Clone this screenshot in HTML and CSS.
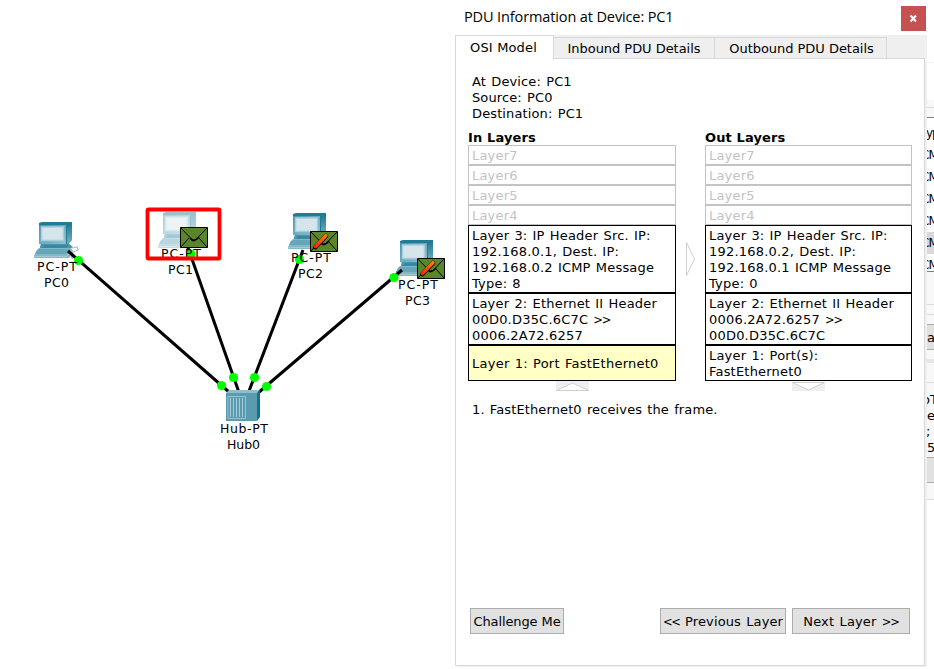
FILE: index.html
```html
<!DOCTYPE html>
<html lang="en">
<head>
<meta charset="utf-8">
<title>PDU Information</title>
<link rel="stylesheet" href="styles.css">
</head>
<body>
<main class="app">
  <svg class="topology" width="455" height="669" viewBox="0 0 455 669">
    <defs>
      <linearGradient id="shell" x1="0" y1="0" x2="1" y2="1">
        <stop offset="0" stop-color="#4496ae"/><stop offset="1" stop-color="#8fc0cf"/>
      </linearGradient>
      <linearGradient id="side" x1="0" y1="0" x2="0" y2="1">
        <stop offset="0" stop-color="#16748f"/><stop offset="1" stop-color="#79afc0"/>
      </linearGradient>
      <linearGradient id="pencil" x1="1" y1="0" x2="0" y2="1">
        <stop offset="0" stop-color="#ff7a00"/><stop offset="1" stop-color="#ff2a00"/>
      </linearGradient>
      <g id="pc">
        <path d="M7 21 H34 L39 25 L32 29 H5Z" fill="#4b93aa"/>
        <path d="M5 1 L8 0 H38 V18 L34 22 H5Z" fill="#207b96"/>
        <path d="M33 4 L38 0 V18 L33 22Z" fill="url(#side)"/>
        <path d="M5 3 H32 V22 H5Z" fill="url(#shell)"/>
        <path d="M7.500 5 H29.500 V18.500 H7.500Z" fill="#d5e5eb" stroke="#a9ced9" stroke-width="1.500"/>
        <path d="M10 23 H35 L32 26 H8Z" fill="#3789a2"/>
        <path d="M3 28 L5 26 H37 L39 29 L35 36 H0 V34Z" fill="#82b8c8"/>
        <path d="M3 28.500 L5 27 H36 L32 32 H1Z" fill="#65a6b9"/>
        <path d="M0 34.500 H33 L38 28" fill="none" stroke="#a2cad5"/>
      </g>
      <g id="mail">
        <path d="M.5 .5 H27.500 V20.500 H.5Z" fill="#5a852b" stroke="#000"/>
        <path d="M1 1 L11.500 12 Q14 14.500 16.500 12 L27 1 M1 20 L9 11 M19 11 L27 20" fill="none" stroke="#000" stroke-width="1"/>
        <path d="M10 11 L12 13 Q14 14.500 17 12 L19 10" fill="none" stroke="#000" stroke-width="1.600"/>
      </g>
      <g id="mail-edit">
        <use href="#mail"/>
        <path d="M5.500 16 L16 5" fill="none" stroke="#000" stroke-width="4.600" stroke-linecap="round"/>
        <path d="M5.500 15.500 L16 4.500" fill="none" stroke="url(#pencil)" stroke-width="3.400" stroke-linecap="round"/>
      </g>
    </defs>

    <use href="#pc" x="34" y="222"/>
    <path d="M72 248 L77 247 L78 250 L71 253 L73 257" fill="none" stroke="#a5c4ce" stroke-width="1.200"/>
    <path d="M69 254 L73 253 L76 257 L72 259Z" fill="#8badb9"/>
    <use href="#pc" x="158" y="212" class="faded"/>
    <use href="#pc" x="288" y="213"/>
    <use href="#pc" x="395" y="240"/>

    <g class="cable">
      <path d="M68 251 L229 392"/>
      <path d="M187 245 L238.500 391"/>
      <path d="M303 250 L249 391"/>
      <path d="M402 270 L258 393"/>
    </g>
    <g fill="#00ff00">
      <circle cx="78.500" cy="260.500" r="4.600"/><circle cx="191" cy="254" r="4.600"/>
      <circle cx="299.500" cy="259.500" r="4.600"/><circle cx="394" cy="277.500" r="4.600"/>
      <circle cx="221.500" cy="385.500" r="4.600"/><circle cx="233.500" cy="377.500" r="4.600"/>
      <circle cx="254.500" cy="377.500" r="4.600"/><circle cx="266.500" cy="386.500" r="4.600"/>
    </g>

    <g>
      <path d="M226 393 L229 390 H260 L257 393Z" fill="#8fbdcc"/>
      <path d="M257 393 L260 390 V417 L257 421Z" fill="#0d7690"/>
      <path d="M226 393 H257 V421 H226Z" fill="#5b9bb0"/>
      <path d="M228 396.500 H245.500 V418.500 H228Z" fill="#5b9bb0" stroke="#98c4d1"/>
      <path d="M230.500 398 V417 M233.500 398 V417 M236.500 398 V417 M239.500 398 V417 M242.500 398 V417" stroke="#a6ccd7" fill="none"/>
    </g>

    <g class="node-label">
      <text x="37" y="271" textLength="40">PC-PT</text><text x="44" y="287" textLength="25">PC0</text>
      <text x="161" y="258" textLength="40">PC-PT</text><text x="168" y="274" textLength="25">PC1</text>
      <text x="291" y="262" textLength="40">PC-PT</text><text x="298" y="278" textLength="25">PC2</text>
      <text x="398" y="289" textLength="40">PC-PT</text><text x="405" y="305" textLength="25">PC3</text>
      <text x="220" y="433" textLength="48">Hub-PT</text><text x="227" y="449" textLength="33">Hub0</text>
    </g>
    <use href="#mail" x="180" y="227"/>
    <use href="#mail-edit" x="310" y="231"/>
    <use href="#mail-edit" x="417" y="258"/>
    <rect x="147.500" y="209.500" width="72" height="49" rx="1" fill="none" stroke="#ff0000" stroke-width="3.800"/>
  </svg>

  <section class="dialog">
    <header class="titlebar">
      <h1>PDU Information at Device: PC1</h1>
      <button class="close" aria-label="Close"><svg width="9" height="9" viewBox="0 0 9 9"><path d="M1.500 1.500 L7 7.500 M7 1.500 L1.500 7.500" stroke="#fff" stroke-width="2" fill="none"/></svg></button>
    </header>
    <nav class="tabs">
      <span class="tab active">OSI Model</span>
      <span class="tab inbound">Inbound PDU Details</span>
      <span class="tab outbound">Outbound PDU Details</span>
    </nav>
    <div class="panel">
      <p class="info">At Device: PC1<br>Source: PC0<br>Destination: PC1</p>
      <div class="stacks">
        <div class="stack in">
          <h2>In Layers</h2>
          <div class="layer off">Layer7</div>
          <div class="layer off">Layer6</div>
          <div class="layer off">Layer5</div>
          <div class="layer off">Layer4</div>
          <div class="layer">Layer 3: IP Header Src. IP:<br>192.168.0.1, Dest. IP:<br>192.168.0.2 ICMP Message<br>Type: 8</div>
          <div class="layer">Layer 2: Ethernet II Header<br>00D0.D35C.6C7C <span class="chevrons">&gt;&gt;</span><br>0006.2A72.6257</div>
          <div class="layer current">Layer 1: Port FastEthernet0</div>
          <svg class="arrow" width="33" height="10" viewBox="0 0 33 10"><path d="M0 0H33V10H0Z" fill="#efefef"/><path d="M.5 9.500 L16.500 2 L32.500 9.500Z" fill="#fff" stroke="#cfcfcf"/></svg>
        </div>
        <svg class="flow" width="9" height="34" viewBox="0 0 9 34"><path d="M.5 .5 L8.500 17 L.5 33.500Z" fill="#fff" stroke="#cfcfcf"/></svg>
        <div class="stack out">
          <h2>Out Layers</h2>
          <div class="layer off">Layer7</div>
          <div class="layer off">Layer6</div>
          <div class="layer off">Layer5</div>
          <div class="layer off">Layer4</div>
          <div class="layer">Layer 3: IP Header Src. IP:<br>192.168.0.2, Dest. IP:<br>192.168.0.1 ICMP Message<br>Type: 0</div>
          <div class="layer">Layer 2: Ethernet II Header<br>0006.2A72.6257 <span class="chevrons">&gt;&gt;</span><br>00D0.D35C.6C7C</div>
          <div class="layer">Layer 1: Port(s):<br>FastEthernet0</div>
          <svg class="arrow" width="33" height="10" viewBox="0 0 33 10"><path d="M0 1H33V10H0Z" fill="#efefef"/><path d="M.5 1.500 L16.500 9 L32.500 1.500Z" fill="#fff" stroke="#cfcfcf"/></svg>
        </div>
      </div>
      <p class="step">1. FastEthernet0 receives the frame.</p>
      <footer class="actions">
        <button class="btn challenge">Challenge Me</button>
        <button class="btn prev"><span class="chevrons">&lt;&lt;</span> Previous Layer</button>
        <button class="btn next">Next Layer <span class="chevrons">&gt;&gt;</span></button>
      </footer>
    </div>
  </section>

  <aside class="behind">
    <div class="blank"></div>
    <div class="gap"></div>
    <div class="head"></div>
    <div class="events">
      <div class="type">yp</div>
      <div>CM</div>
      <div>CM</div>
      <div>CM</div>
      <div>CM</div>
      <div class="selected">CM</div>
      <div class="last">CM</div>
    </div>
    <div class="spacer"></div>
    <div class="rule"></div>
    <div class="small-btn">a</div>
    <div class="divider"></div>
    <div class="band"></div>
    <div class="filters">oT<br>e<br><span class="mark">;</span><br>5,</div>
    <div class="small-btn"></div>
    <div class="foot"></div>
  </aside>
</main>
</body>
</html>
```
FILE: styles.css
```css
* { box-sizing: border-box; }
body {
  margin: 0;
  background: #fff;
  color: #000;
  font: 13px/16px "DejaVu Sans", sans-serif;
  letter-spacing: 0.12px;
}
h1, h2, p { margin: 0; }
svg { display: block; }
.app { display: flex; width: 934px; height: 669px; overflow: hidden; }
.topology { flex: none; }
.faded { opacity: 0.45; }
.cable { fill: none; stroke: #000; stroke-width: 3; }
.node-label { font-size: 12.5px; letter-spacing: 0; }

.dialog { width: 472px; flex: none; height: 669px; }
.titlebar { display: flex; justify-content: space-between; height: 35px; padding: 6px 1px 0 9px; }
.titlebar h1 {
  font: 400 14.5px/22px "Open Sans", sans-serif;
  letter-spacing: -0.12px;
  white-space: nowrap;
}
.close {
  display: flex; align-items: center; justify-content: center;
  width: 25px; height: 25px; padding: 0;
  border: 0; background: #c75050;
}
.tabs { display: flex; align-items: flex-end; height: 24px; background: #efefef; letter-spacing: -0.04px; }
.tab {
  height: 22px; padding-top: 3px;
  text-align: center; white-space: nowrap;
  border: solid #d9d9d9; border-width: 1px 1px 1px 0;
}
.tab.active {
  width: 99px; height: 24px; padding: 4px 2px 0 0;
  background: #fff; border-width: 1px 1px 0 1px;
  letter-spacing: 0.15px;
}
.inbound { width: 161px; }
.outbound { width: 172px; padding-left: 2px; }
.tabs::after { content: ""; flex: 1; height: 1px; margin-right: 2px; background: #d9d9d9; }

.panel {
  display: flex; flex-direction: column;
  height: 607px;
  border: solid #d9d9d9; border-width: 0 1px 1px 1px;
  margin-right: 2px;
  box-shadow: 2px 1px 0 #efefef;
}
.info { padding: 15px 0 0 16px; height: 70px; word-spacing: 1px; }
.stacks { display: flex; padding-left: 12px; height: 264px; }
.stack h2 { font-size: 13px; line-height: 18px; height: 16px; letter-spacing: 0.13px; white-space: nowrap; }
.in { width: 208px; }
.out { width: 207px; }
.layer {
  padding: 2px 2px 0 3px; border: 1px solid #000;
  white-space: nowrap; letter-spacing: 0.2px; word-spacing: 0.8px;
}
.layer.off { color: #c3c3c3; border-color: #c3c3c3; }
.layer.current { height: 36px; padding-top: 10px; background: #ffffc6; letter-spacing: 0.25px; }
.arrow { margin-left: 88px; }
.out .arrow { margin-left: 87px; }
.flow { margin: 113px 10px 0 10px; }
.step { padding: 9px 0 0 16px; word-spacing: 0.9px; }
.chevrons { font-size: 11.5px; line-height: 0; letter-spacing: -1.2px; }
.actions { display: flex; margin-top: auto; padding: 0 14px 31px; }
.btn {
  height: 26px; padding: 1px 0 0;
  border: 1px solid #adadad; background: #e1e1e1; color: #000;
  font: inherit; letter-spacing: inherit; white-space: nowrap;
}
.challenge { width: 94px; letter-spacing: -0.1px; }
.prev { width: 126px; margin-left: auto; margin-right: 6px; letter-spacing: 0.12px; word-spacing: 1px; }
.next { width: 118px; letter-spacing: 0.15px; word-spacing: 1px; }

.behind { width: 7px; overflow: hidden; }
.blank { height: 63px; border-bottom: 1px solid #f4f4f4; }
.gap { height: 37px; }
.head { height: 17px; background: #f8f8f8; border-bottom: 9px solid #f8f8f8; box-shadow: inset 0 -1px 0 #d9d9d9; }
.events { height: 155px; border: solid #828282; border-width: 1px 0; font-size: 12px; }
.events div { height: 22px; line-height: 23px; text-indent: -6px; white-space: nowrap; letter-spacing: -1px; }
.events .type { height: 26px; line-height: 31px; text-indent: -1px; }
.events .selected { background: #d9d9d9; }
.events .last { height: 17px; }
.spacer { height: 33px; background: #f8f8f8; border-bottom: 1px solid #dcdcdc; }
.rule { height: 19px; background: #f8f8f8; border-bottom: 9px solid #f8f8f8; box-shadow: inset 0 -1px 0 #dcdcdc; }
.small-btn { height: 26px; line-height: 25px; background: #e1e1e1; border: solid #adadad; border-width: 1px 0; }
.divider { height: 13px; border: solid #f8f8f8; border-width: 9px 0 0; background: #e3e7e5; }
.band { height: 28px; background: #f8f8f8; border-bottom: 8px solid #f8f8f8; box-shadow: inset 0 -1px 0 #dcdcdc; }
.filters { height: 66px; padding-top: 1px; background: #f8f8f8; text-indent: -5px; white-space: nowrap; }
.filters .mark { margin-left: -1px; }
.foot { height: 17px; background: #f8f8f8; border-bottom: 1px solid #dcdcdc; }
```
